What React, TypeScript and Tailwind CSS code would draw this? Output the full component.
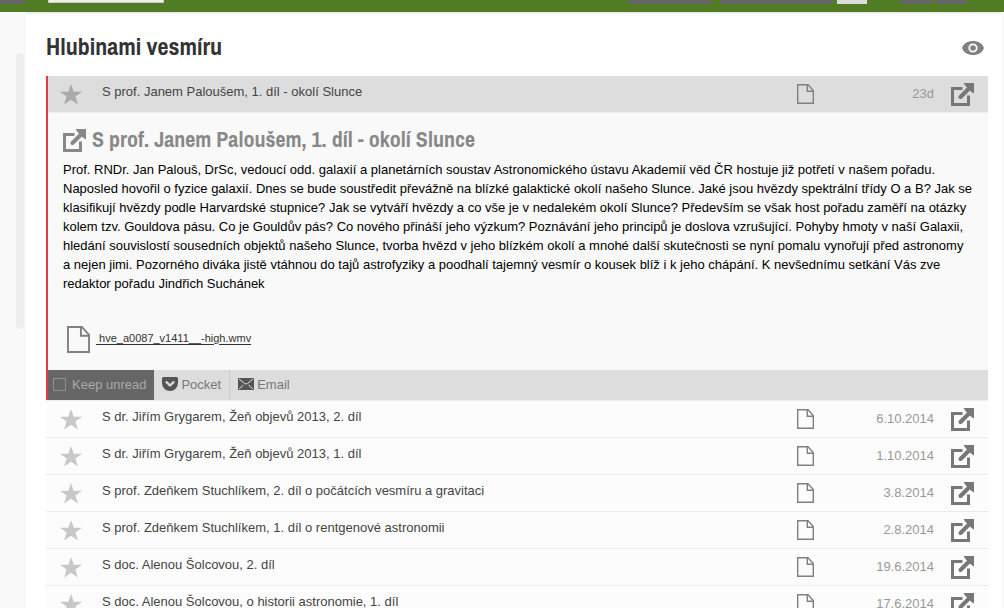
import type { ReactNode } from "react";

type Entry = {
  title: string;
  date: string;
};

const entries: Entry[] = [
  { title: "S dr. Jiřím Grygarem, Žeň objevů 2013, 2. díl", date: "6.10.2014" },
  { title: "S dr. Jiřím Grygarem, Žeň objevů 2013, 1. díl", date: "1.10.2014" },
  { title: "S prof. Zdeňkem Stuchlíkem, 2. díl o počátcích vesmíru a gravitaci", date: "3.8.2014" },
  { title: "S prof. Zdeňkem Stuchlíkem, 1. díl o rentgenové astronomii", date: "2.8.2014" },
  { title: "S doc. Alenou Šolcovou, 2. díl", date: "19.6.2014" },
  { title: "S doc. Alenou Šolcovou, o historii astronomie, 1. díl", date: "17.6.2014" },
];

function StarIcon() {
  return (
    <svg width="22" height="21" viewBox="0 0 22 21" fill="currentColor">
      <path d="M11 0l2.7 7.7H22l-6.6 4.9 2.5 7.9L11 15.7l-6.9 4.8 2.5-7.9L0 7.7h8.3z" />
    </svg>
  );
}

function FileIcon({ className }: { className: string }) {
  return (
    <svg className={className} viewBox="0 0 17 20" fill="none" stroke="currentColor" strokeWidth="1.4">
      <path d="M.7.7H11L16.3 6.5V19.3H.7z" />
      <path d="M10.3.7V7.2H16.3" />
    </svg>
  );
}

function OpenIcon() {
  return (
    <svg className="shrink-0" width="23" height="23" viewBox="0 0 23 23" fill="none" stroke="currentColor">
      <path d="M11.500 5.500H1.500v16h16V12.500" strokeWidth="3" />
      <path d="M9.500 14L20 3.500" strokeWidth="4" strokeLinecap="round" />
      <path d="M12.500 0H23v10.500L20.500 9 14.500 3z" fill="currentColor" stroke="none" />
    </svg>
  );
}

function EyeIcon() {
  return (
    <svg width="22" height="14" viewBox="0 0 22 14">
      <ellipse cx="11" cy="7" rx="11" ry="7" fill="none" />
      <path fill="currentColor" d="M0 7C1.500 2.600 6 0 11 0s9.500 2.600 11 7c-1.500 4.400-6 7-11 7S1.500 11.400 0 7z" />
      <circle cx="11" cy="7" r="3.7" fill="currentColor" stroke="#fff" strokeWidth="1.8" />
    </svg>
  );
}

function PocketIcon() {
  return (
    <svg width="16" height="14" viewBox="0 0 16 14">
      <path fill="currentColor" d="M1.500 0h13A1.500 1.500 0 0 1 16 1.500V6a8 8 0 0 1-16 0V1.500A1.500 1.500 0 0 1 1.500 0z" />
      <path d="M4.500 5.200L8 8.500l3.500-3.300" fill="none" stroke="#ddd" strokeWidth="2.4" strokeLinecap="round" strokeLinejoin="round" />
    </svg>
  );
}

function MailIcon() {
  return (
    <svg width="16" height="12" viewBox="0 0 16 12">
      <path fill="currentColor" d="M0 0h16v12H0z" />
      <path d="M1 1l5.500 4.500q1.500 1 3 0L15 1M1 11l4.500-4M15 11l-4.500-4" fill="none" stroke="#ddd" />
    </svg>
  );
}

function Row({ title, date, children }: Entry & { children?: ReactNode }) {
  return (
    <div className="flex h-9 items-center pr-3.5">
      <button type="button" aria-label="Star" className="mr-5 ml-3 shrink-0 text-[#c8c8c8]">
        {children ?? <StarIcon />}
      </button>
      <h3 className="min-w-0 flex-1 truncate pb-1.5 text-[#444]">{title}</h3>
      <FileIcon className="h-5 w-[17px] shrink-0 text-[#808080]" />
      <time className="w-[120px] shrink-0 pb-0.5 text-right text-[#999]">{date}</time>
      <a href="#" aria-label="Open" className="ml-[17px] text-[#777]">
        <OpenIcon />
      </a>
    </div>
  );
}

function TopBar() {
  return (
    <header className="flex h-3 items-start bg-[#527c24] shadow-sm">
      <button type="button" aria-label="Menu" className="h-1 w-[25px] bg-[#666]" />
      <input aria-label="Search" className="ml-[23px] h-[3px] w-[116px] border-x border-b border-[#ccc] bg-[#eee]" />
      <div className="ml-auto flex pr-[38px]">
        <button type="button" aria-label="Mark as read" className="mr-2 h-1 w-[83px] bg-[#666]" />
        <button type="button" aria-label="Sort" className="mr-1 h-1 w-[113px] bg-[#666]" />
        <button type="button" aria-label="List view" className="mr-[34px] h-1 w-[30px] bg-[#ddd]" />
        <button type="button" aria-label="Previous" className="mr-[3px] h-1 w-[31px] bg-[#666]" />
        <button type="button" aria-label="Next" className="h-1 w-[31px] bg-[#666]" />
      </div>
    </header>
  );
}

export default function App() {
  return (
    <div className="flex h-screen flex-col overflow-hidden bg-white font-['Liberation_Sans',Arial,sans-serif] text-[13px] leading-[19px]">
      <TopBar />
      <div className="flex min-h-0 flex-1">
        <aside className="w-[26px] shrink-0 bg-[#f9f9f9] pt-[41px] pl-4">
          <div className="h-[276px] w-2 rounded-full bg-[#eee]" />
        </aside>

        <main className="min-w-0 flex-1 pr-[13px] pl-5">
          <div className="flex h-16 items-center justify-between pt-2 pr-1">
            <h1 className="pb-1 font-['Archivo_Narrow','Liberation_Sans_Narrow','Liberation_Sans',sans-serif] text-2xl font-bold text-[#333]">
              Hlubinami vesmíru
            </h1>
            <button type="button" aria-label="Show unread" className="text-[#808080]">
              <EyeIcon />
            </button>
          </div>

          <article className="border-l-2 border-[#e23b40] bg-[#f9f9f9]">
            <div className="border-b border-b-[#eee] bg-[#ddd]">
              <Row title="S prof. Janem Paloušem, 1. díl - okolí Slunce" date="23d">
                <span className="text-[#aaa]">
                  <StarIcon />
                </span>
              </Row>
            </div>

            <div className="px-[15px] pt-[15px] pb-[17px]">
              <h2 className="flex h-6 items-center gap-1.5 text-[#888]">
                <OpenIcon />
                <a
                  href="#"
                  className="pb-0.5 font-['Archivo_Narrow','Liberation_Sans_Narrow','Liberation_Sans',sans-serif] text-[22px] leading-6 font-bold"
                >
                  S prof. Janem Paloušem, 1. díl - okolí Slunce
                </a>
              </h2>
              <p className="mt-2 text-black">
                Prof. RNDr. Jan Palouš, DrSc, vedoucí odd. galaxií a planetárních soustav Astronomického ústavu Akademií
                věd ČR hostuje již potřetí v našem pořadu. Naposled hovořil o fyzice galaxií. Dnes se bude soustředit
                převážně na blízké galaktické okolí našeho Slunce. Jaké jsou hvězdy spektrální třídy O a B? Jak se
                klasifikují hvězdy podle Harvardské stupnice? Jak se vytváří hvězdy a co vše je v nedalekém okolí Slunce?
                Především se však host pořadu zaměří na otázky kolem tzv. Gouldova pásu. Co je Gouldův pás? Co nového
                přináší jeho výzkum? Poznávání jeho principů je doslova vzrušující. Pohyby hmoty v naší Galaxii, hledání
                souvislostí sousedních objektů našeho Slunce, tvorba hvězd v jeho blízkém okolí a mnohé další skutečnosti
                se nyní pomalu vynořují před astronomy a nejen jimi. Pozorného diváka jistě vtáhnou do tajů astrofyziky a
                poodhalí tajemný vesmír o kousek blíž i k jeho chápání. K nevšednímu setkání Vás zve redaktor pořadu
                Jindřich Suchánek
              </p>
              <div className="mt-8 flex h-7 items-center gap-1.5 pl-1">
                <FileIcon className="h-[27px] w-[23px] text-[#808080]" />
                <a href="#" className="pb-0.5 text-[11px] whitespace-pre text-[#333] underline underline-offset-2">
                  {" hve_a0087_v1411__-high.wmv"}
                </a>
              </div>
            </div>

            <div className="flex h-[30px] bg-[#ddd] text-[#777]">
              <label className="flex items-center gap-1.5 bg-[#666] pr-2 pb-0.5 pl-[5px] text-[#aaa]">
                <input type="checkbox" className="size-[13px] appearance-none border border-[#909090]" />
                Keep unread
              </label>
              <button type="button" className="flex items-center gap-[3px] border-r border-[#ccc] px-2 pb-0.5">
                <span className="text-[#555]">
                  <PocketIcon />
                </span>
                Pocket
              </button>
              <button type="button" className="flex items-center gap-[3px] px-2 pb-0.5">
                <span className="text-[#555]">
                  <MailIcon />
                </span>
                Email
              </button>
            </div>
          </article>

          <ul className="border-t border-[#eee] bg-[#fcfcfc]">
            {entries.map((entry) => (
              <li key={entry.title} className="border-b border-[#eaeaea] pl-0.5">
                <Row title={entry.title} date={entry.date} />
              </li>
            ))}
          </ul>
        </main>
        <div className="w-[3px] shrink-0 bg-[#fafafa]" />
      </div>
    </div>
  );
}
